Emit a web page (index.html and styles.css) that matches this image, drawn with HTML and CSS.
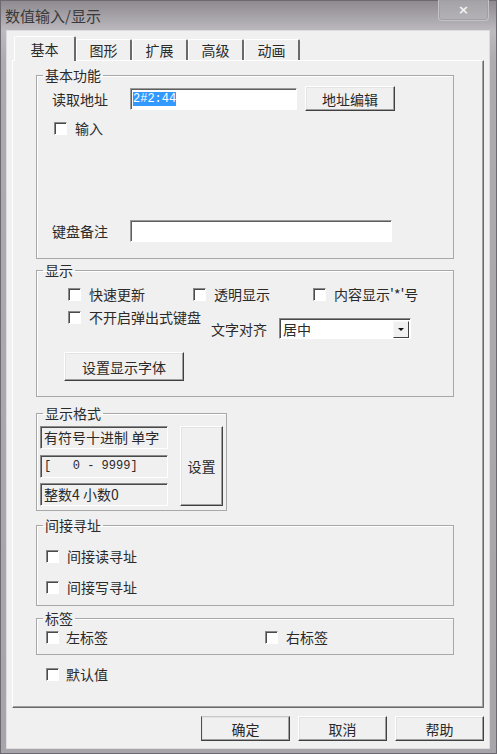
FILE: index.html
```html
<!DOCTYPE html>
<html lang="zh-CN">
<head>
    <meta charset="UTF-8">
    <title>数值输入/显示</title>
    <link rel="stylesheet" href="styles.css">
</head>
<body>
<div class="window">
    <div class="titlebar">
        <span class="title">数值输入/显示</span>
        <span class="close">×</span>
    </div>

    <div class="client">
        <!-- Tabs -->
        <div class="tabs">
            <div class="tab active">基本</div>
            <div class="tab">图形</div>
            <div class="tab">扩展</div>
            <div class="tab">高级</div>
            <div class="tab">动画</div>
        </div>

        <div class="panel">
            <!-- 基本功能 -->
            <fieldset class="group g-basic">
                <legend>基本功能</legend>
                <div class="body">
                    <div class="row row-addr">
                        <span class="label">读取地址</span>
                        <div class="edit edit-addr"><span class="sel">2#2:44</span></div>
                        <button class="btn btn-addr">地址编辑</button>
                    </div>
                    <div class="check-item input-check"><span class="check"></span>输入</div>
                    <div class="row row-note">
                        <span class="label">键盘备注</span>
                        <div class="edit edit-note"></div>
                    </div>
                </div>
            </fieldset>

            <!-- 显示 -->
            <fieldset class="group g-display">
                <legend>显示</legend>
                <div class="body">
                    <div class="row row-a">
                        <div class="check-item w-fast"><span class="check"></span>快速更新</div>
                        <div class="check-item w-trans"><span class="check"></span>透明显示</div>
                        <div class="check-item"><span class="check"></span>内容显示'*'号</div>
                    </div>
                    <div class="row row-b">
                        <div class="check-item w-popup"><span class="check"></span>不开启弹出式键盘</div>
                        <div class="align-group">
                            <span class="align-label">文字对齐</span>
                            <div class="combo">
                                <span class="combo-text">居中</span>
                                <span class="combo-btn"><span class="arrow"></span></span>
                            </div>
                        </div>
                    </div>
                    <button class="btn btn-font">设置显示字体</button>
                </div>
            </fieldset>

            <!-- 显示格式 -->
            <fieldset class="group g-format">
                <legend>显示格式</legend>
                <div class="body">
                    <div class="fields">
                        <div class="field">有符号十进制 单字</div>
                        <div class="field mono">[   0 - 9999]</div>
                        <div class="field">整数4 小数0</div>
                    </div>
                    <button class="btn btn-set">设置</button>
                </div>
            </fieldset>

            <!-- 间接寻址 -->
            <fieldset class="group g-indirect">
                <legend>间接寻址</legend>
                <div class="body">
                    <div class="check-item"><span class="check"></span>间接读寻址</div>
                    <div class="check-item second"><span class="check"></span>间接写寻址</div>
                </div>
            </fieldset>

            <!-- 标签 -->
            <fieldset class="group g-label">
                <legend>标签</legend>
                <div class="body">
                    <div class="check-item w-left"><span class="check"></span>左标签</div>
                    <div class="check-item"><span class="check"></span>右标签</div>
                </div>
            </fieldset>

            <div class="check-item default-check"><span class="check"></span>默认值</div>
        </div>

        <!-- Dialog buttons -->
        <div class="actions">
            <button class="btn btn-dlg btn-default">确定</button>
            <button class="btn btn-dlg">取消</button>
            <button class="btn btn-dlg">帮助</button>
        </div>
    </div>
</div>
</body>
</html>
```

FILE: styles.css
```css
* {
    box-sizing: border-box;
}
body {
    margin: 0;
    font-family: "Noto Sans CJK SC", "Noto Sans", sans-serif;
    font-size: 14px;
    color: #2a2a2a;
}

/* window frame */
.window {
    width: 497px;
    height: 754px;
    display: flex;
    flex-direction: column;
    border: 1px solid #6d6970;
    background: linear-gradient(#8e8a90, #bdbabf 30px, #aeabb0 60px, #a8a5aa);
}
.titlebar {
    height: 30px;
    display: flex;
    align-items: flex-start;
}
.title {
    margin: 5px 0 0 4px;
    font-size: 15px;
    line-height: 20px;
    color: #3a3a3a;
}
.close {
    margin: -1px 7px 0 auto;
    width: 51px;
    height: 21px;
    border: 1px solid #c4c2c6;
    border-top: none;
    border-radius: 0 0 4px 4px;
    box-shadow: inset 0 0 0 1px #a19ea4;
    background: linear-gradient(#a5a2a7, #b5b2b7);
    color: #f2f2f2;
    font-family: "DejaVu Sans", sans-serif;
    font-size: 13px;
    font-weight: bold;
    line-height: 19px;
    text-align: center;
}
.client {
    flex: 1;
    margin: 0 7px 5px 6px;
    background: #f0f0f0;
    padding: 5px 5px 0 5px;
    box-shadow: 0 0 0 1px #dcdbdd;
}

/* tabs */
.tabs {
    display: flex;
    align-items: flex-end;
    height: 25px;
    margin: 0 0 -1px 2px;
    position: relative;
    z-index: 1;
}
.tab {
    width: 56px;
    height: 21px;
    margin-bottom: 1px;
    border-top: 1px solid #fff;
    border-left: 1px solid #fff;
    border-right: 2px solid #6a6a6a;
    border-radius: 2px 2px 0 0;
    background: #f0f0f0;
    text-align: center;
    line-height: 20px;
}
.tab.active {
    width: 62px;
    height: 25px;
    margin-bottom: 0;
    line-height: 24px;
}
.panel {
    height: 648px;
    display: flex;
    flex-direction: column;
    padding: 6px 29px 0 23px;
    border: 1px solid;
    border-color: #fff #6a6a6a #6a6a6a #fff;
    box-shadow: inset -1px -1px 0 #a0a0a0;
}

/* group boxes */
.group {
    margin: 0;
    padding: 0;
    min-width: 0;
    border: 1px solid #a8a8a8;
    box-shadow: inset 1px 1px 0 #fff;
}
.group legend {
    margin-left: 6px;
    padding: 0 2px;
    line-height: 16px;
}
.row {
    display: flex;
    align-items: center;
}
.label {
    width: 78px;
}
.check-item {
    display: flex;
    align-items: center;
    gap: 8px;
    height: 16px;
}
.check {
    width: 13px;
    height: 13px;
    flex-shrink: 0;
    background: #fff;
    border: 1px solid;
    border-color: #8a8a8a #fff #fff #8a8a8a;
    box-shadow: inset 1px 1px 0 #4a4a4a;
}
.edit {
    height: 22px;
    background: #fff;
    border: 1px solid;
    border-color: #9a9a9a #fff #fff #9a9a9a;
    box-shadow: inset 1px 1px 0 #5e5e5e;
    display: flex;
    align-items: center;
    padding-left: 2px;
}
.sel {
    background: #3399ff;
    color: #fff;
    font-family: "Liberation Mono", monospace;
    font-size: 12px;
    line-height: 13px;
    padding-top: 1px;
}
.btn {
    font: inherit;
    color: #2a2a2a;
    padding: 0;
    background: #f0f0f0;
    border: 1px solid;
    border-color: #fff #404040 #404040 #fff;
    box-shadow: inset -1px -1px 0 #a0a0a0, inset 1px 1px 0 #e3e3e3;
}

/* 基本功能 */
.g-basic .body {
    padding: 3px 0 16px 15px;
}
.row-addr {
    height: 25px;
}
.edit-addr {
    width: 167px;
}
.btn-addr {
    width: 90px;
    height: 25px;
    margin-left: 8px;
}
.input-check {
    margin: 9px 0 0 2px;
}
.row-note {
    margin-top: 84px;
}
.edit-note {
    width: 262px;
}

/* 显示 */
.g-display {
    margin-top: 3px;
}
.g-display .body {
    padding: 8px 0 15px 27px;
}
.row-a, .row-b {
    padding-left: 4px;
}
.w-fast {
    width: 125px;
}
.w-trans {
    width: 120px;
}
.row-b {
    margin-top: 7px;
    align-items: flex-start;
}
.w-popup {
    width: 143px;
}
.align-group {
    display: flex;
    align-items: center;
    margin-top: 9px;
}
.align-label {
    width: 68px;
}
.combo {
    width: 132px;
    height: 21px;
    display: flex;
    align-items: center;
    background: #fff;
    border: 1px solid;
    border-color: #8a8a8a #fff #fff #8a8a8a;
    box-shadow: inset 1px 1px 0 #4a4a4a;
    padding: 1px 1px 0 3px;
}
.combo-text {
    flex: 1;
    line-height: 16px;
}
.combo-btn {
    width: 16px;
    height: 17px;
    background: #f0f0f0;
    border: 1px solid;
    border-color: #f8f8f8 #404040 #404040 #f8f8f8;
    display: flex;
    align-items: center;
    justify-content: center;
}
.arrow {
    width: 0;
    height: 0;
    border-left: 3px solid transparent;
    border-right: 3px solid transparent;
    border-top: 3px solid #111;
}
.btn-font {
    display: block;
    width: 120px;
    height: 29px;
    margin-top: 13px;
}

/* 显示格式 */
.g-format {
    width: 191px;
    margin-top: 8px;
}
.g-format .body {
    display: flex;
    padding: 5px 3px 4px 3px;
}
.fields {
    width: 129px;
}
.field {
    height: 23px;
    padding-left: 3px;
    line-height: 21px;
    white-space: pre;
    overflow: hidden;
    border: 1px solid;
    border-color: #8a8a8a #fff #fff #8a8a8a;
    box-shadow: inset 1px 1px 0 #4a4a4a;
}
.field + .field {
    margin-top: 6px;
}
.field + .field + .field {
    margin-top: 5px;
}
.field.mono {
    font-family: "Liberation Mono", monospace;
    font-size: 12px;
}
.btn-set {
    width: 43px;
    margin-left: 12px;
}

/* 间接寻址 */
.g-indirect {
    margin-top: 6px;
}
.g-indirect .body {
    padding: 15px 0 10px 9px;
}
.g-indirect .second {
    margin-top: 15px;
}

/* 标签 */
.g-label {
    margin-top: 4px;
}
.g-label .body {
    display: flex;
    padding: 3px 0 9px 9px;
}
.w-left {
    width: 219px;
    gap: 7px;
}
.default-check {
    margin: 11px 0 0 10px;
    gap: 7px;
}

/* dialog buttons */
.actions {
    display: flex;
    justify-content: flex-end;
    gap: 8px;
    margin-top: 8px;
}
.btn-dlg {
    width: 89px;
    height: 25px;
}
.btn-default {
    border-left-color: #505050;
    border-top-color: #c8c8c8;
}
```
